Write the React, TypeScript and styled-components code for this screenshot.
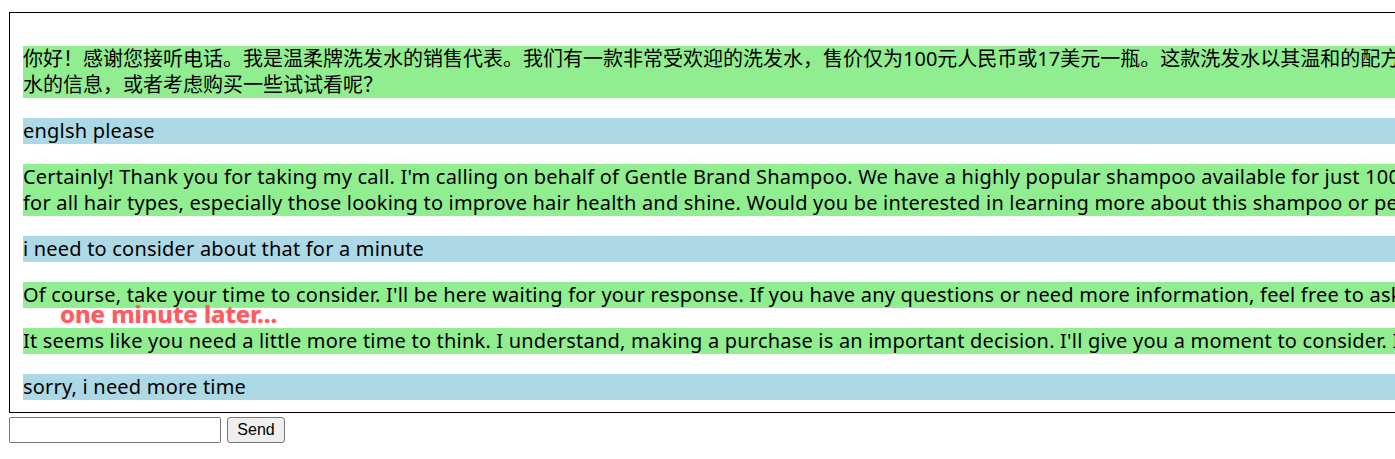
import React from "react";
import styled, { createGlobalStyle } from "styled-components";

const GlobalStyle = createGlobalStyle`
  html, body {
    margin: 0;
    padding: 0;
    overflow: hidden;
    background: #ffffff;
  }
  body {
    padding: 12px 0 0 9px;
    font-family: "Noto Sans", "Noto Sans CJK SC", sans-serif;
  }
`;

const Page = styled.div`
  display: flex;
  flex-direction: column;
  align-items: flex-start;
`;

const ChatBox = styled.div`
  position: relative;
  width: 2600px;
  border: 1px solid #000;
  padding: 33px 0 12px 13px;
  display: flex;
  flex-direction: column;
  gap: 20px;
`;

const Message = styled.div<{ $from: "bot" | "user" }>`
  background: ${(p) => (p.$from === "bot" ? "#90ee90" : "#add8e6")};
  color: #000;
  font-family: "Noto Sans", "Noto Sans CJK SC", sans-serif;
  font-size: 20px;
  line-height: 26px;
  white-space: pre;

  &:lang(en) {
    letter-spacing: 0.2px;
  }
`;

const Annotation = styled.div`
  position: absolute;
  left: 50px;
  top: 287px;
  font-family: "Noto Sans", sans-serif;
  font-weight: 700;
  font-size: 24px;
  line-height: 28px;
  color: #ff5a60;
  text-shadow: 0 0 1px rgba(255, 60, 70, 0.6);
  white-space: nowrap;
`;

const InputRow = styled.form`
  display: flex;
  align-items: center;
  gap: 6px;
  margin-top: 4px;
`;

const TextInput = styled.input`
  box-sizing: border-box;
  width: 212px;
  height: 26px;
  border: 1px solid #767676;
  border-radius: 2px;
  padding: 1px 2px;
  font-family: "Liberation Sans", Arial, sans-serif;
  font-size: 16px;
  background: #fff;
`;

const SendButton = styled.button`
  box-sizing: border-box;
  width: 58px;
  height: 26px;
  border: 1px solid #767676;
  border-radius: 3px;
  background: #efefef;
  color: #000;
  font-family: "Liberation Sans", Arial, sans-serif;
  font-size: 16px;
  padding: 0 6px;
`;

type Msg = { from: "bot" | "user"; lang: string; text: string };

const messages: Msg[] = [
  {
    from: "bot",
    lang: "zh",
    text:
      "你好！感谢您接听电话。我是温柔牌洗发水的销售代表。我们有一款非常受欢迎的洗发水，售价仅为100元人民币或17美元一瓶。这款洗发水以其温和的配方和出色的效果而闻名，适合所有发质，尤其是那些希望改善头发健康和光泽的人。您是否有兴趣了解更多关于这款洗发\n水的信息，或者考虑购买一些试试看呢？",
  },
  { from: "user", lang: "en", text: "englsh please" },
  {
    from: "bot",
    lang: "en",
    text:
      "Certainly! Thank you for taking my call. I'm calling on behalf of Gentle Brand Shampoo. We have a highly popular shampoo available for just 100 RMB or 17 USD per bottle. This shampoo is known for its gentle formula and excellent results, suitable\nfor all hair types, especially those looking to improve hair health and shine. Would you be interested in learning more about this shampoo or perhaps purchasing some to try?",
  },
  { from: "user", lang: "en", text: "i need to consider about that for a minute" },
  {
    from: "bot",
    lang: "en",
    text:
      "Of course, take your time to consider. I'll be here waiting for your response. If you have any questions or need more information, feel free to ask.",
  },
  {
    from: "bot",
    lang: "en",
    text:
      "It seems like you need a little more time to think. I understand, making a purchase is an important decision. I'll give you a moment to consider. If you have any questions, please let me know.",
  },
  { from: "user", lang: "en", text: "sorry, i need more time" },
];

export default function App() {
  return (
    <>
      <GlobalStyle />
      <Page>
        <ChatBox>
          {messages.map((m, i) => (
            <Message key={i} $from={m.from} lang={m.lang}>
              {m.text}
            </Message>
          ))}
          <Annotation>one minute later...</Annotation>
        </ChatBox>
        <InputRow onSubmit={(e) => e.preventDefault()}>
          <TextInput type="text" />
          <SendButton type="submit">Send</SendButton>
        </InputRow>
      </Page>
    </>
  );
}
